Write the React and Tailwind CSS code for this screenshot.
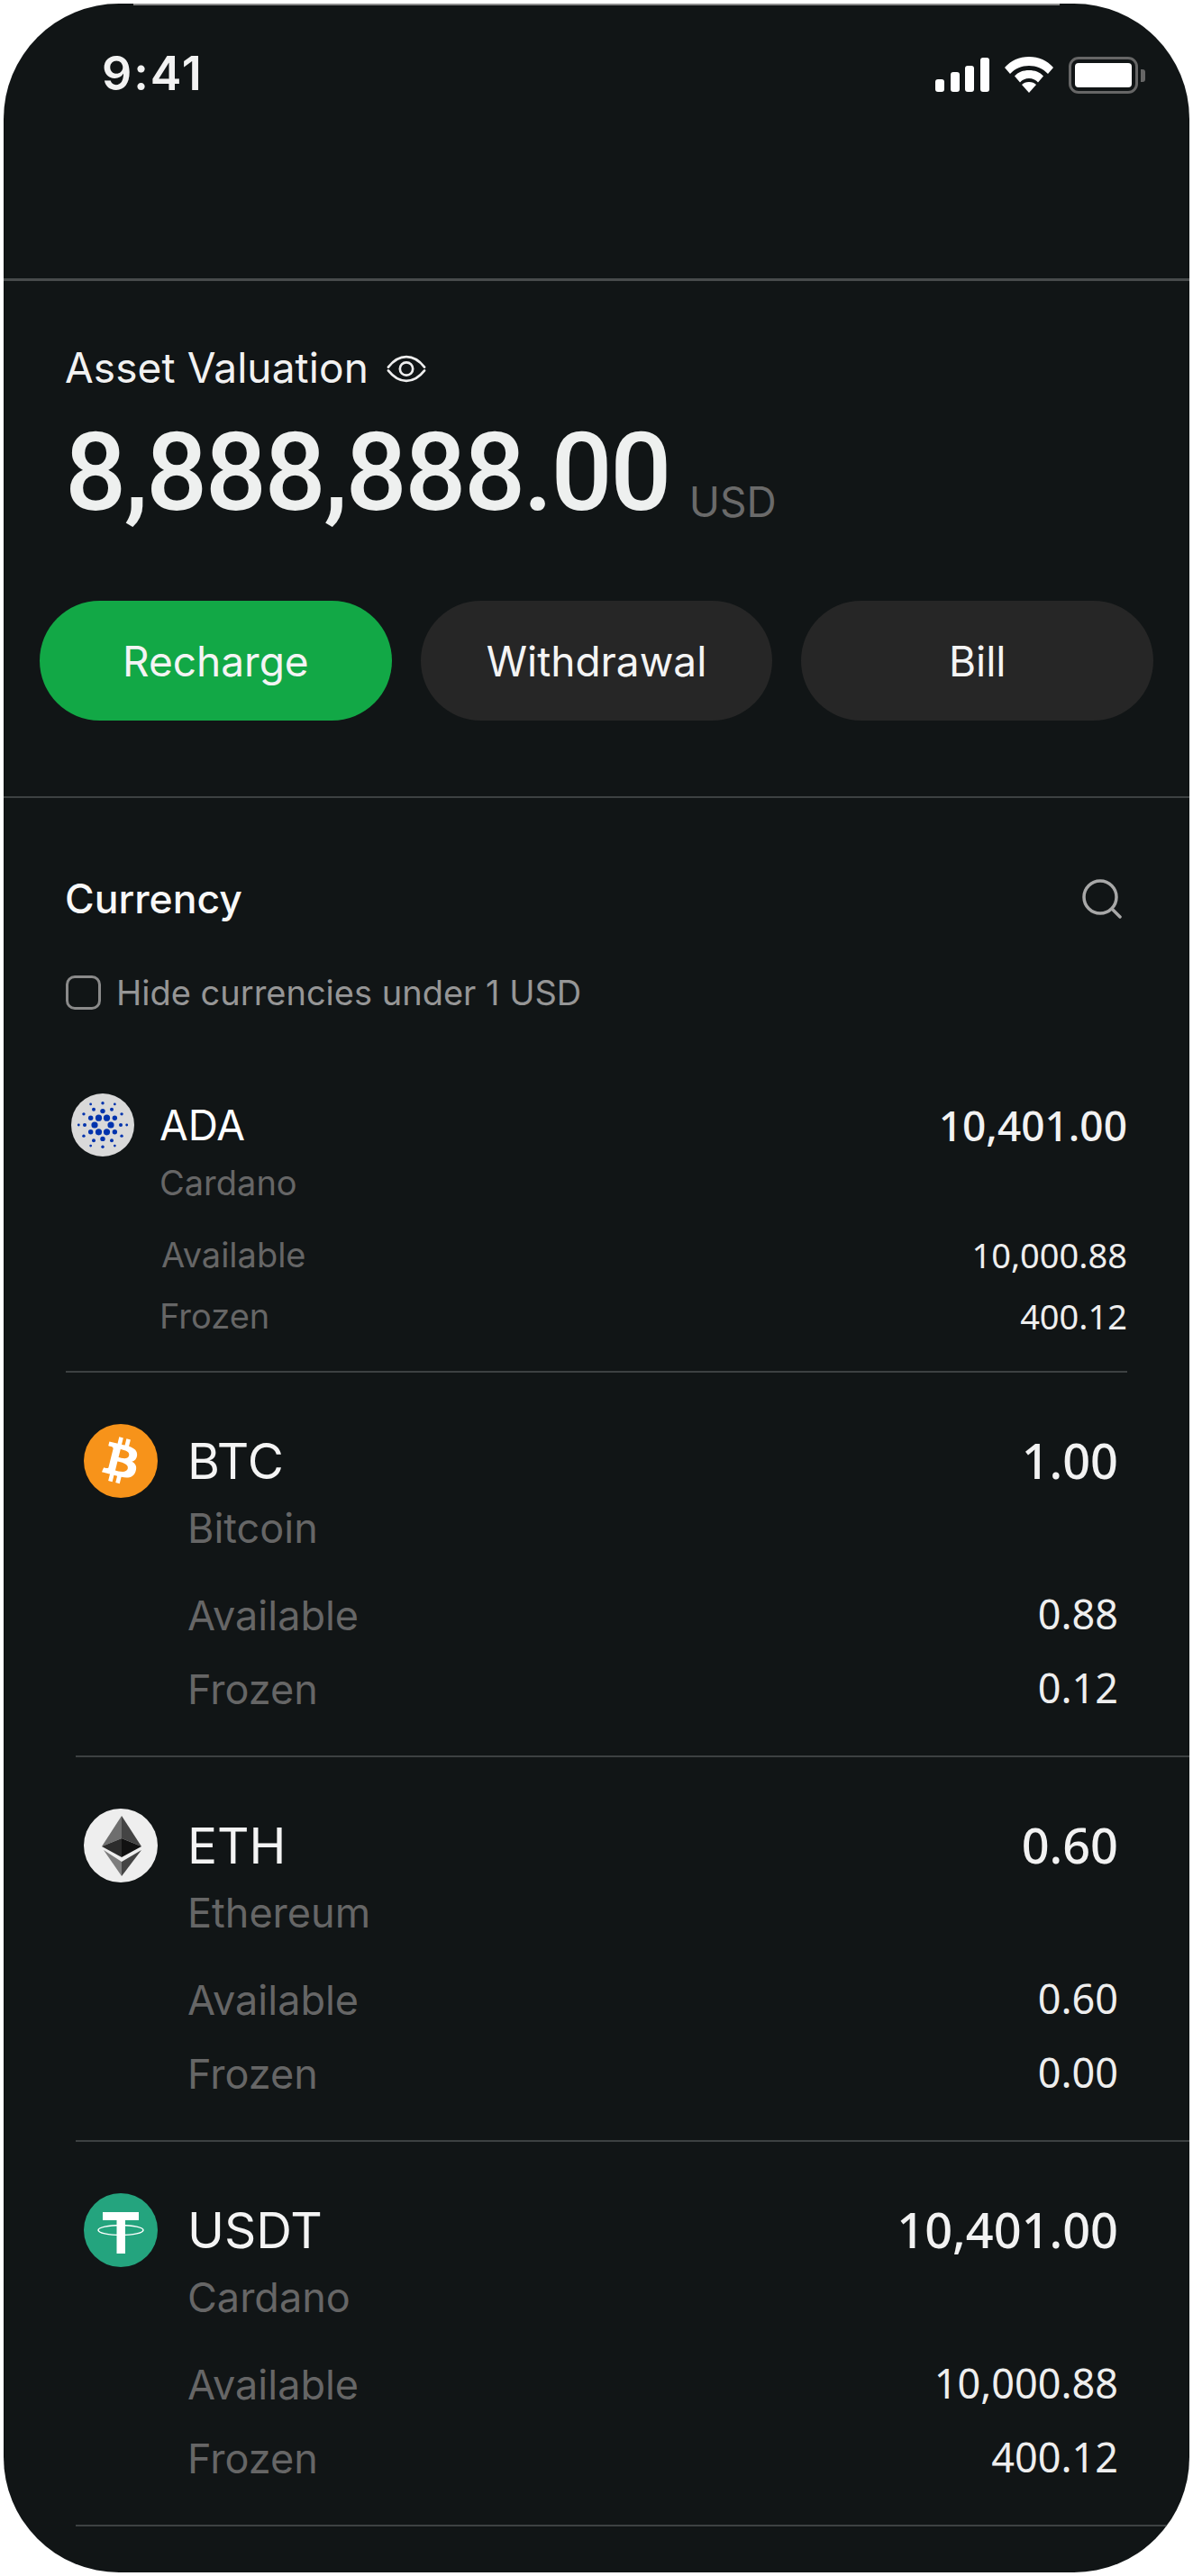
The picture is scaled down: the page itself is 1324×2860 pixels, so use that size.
import { useMemo } from "react";

const sans = { fontFamily: "Inter, sans-serif" };
const numbers = { fontFamily: "'Noto Sans', sans-serif" };

const AdaIcon = () => {
	// rings of dots, measured off the logo
	const dots = useMemo(() => {
		const rings = [
			{ d: 9, r: 3.6, a: 0 },
			{ d: 15.4, r: 2.7, a: 30 },
			{ d: 20, r: 2, a: 0 },
			{ d: 24.3, r: 1.7, a: 30 },
			{ d: 26.7, r: 1.4, a: 0 },
		];
		const out = [];
		rings.forEach((ring) => {
			for (let i = 0; i < 6; i++) {
				const t = ((ring.a + i * 60) * Math.PI) / 180;
				out.push({ x: 35 + ring.d * Math.cos(t), y: 35 + ring.d * Math.sin(t), r: ring.r });
			}
		});
		return out;
	}, []);
	return (
		<svg viewBox="0 0 70 70" className="w-[70px] h-[70px] shrink-0">
			<circle cx="35" cy="35" r="35" fill="#d9d9d9" />
			{dots.map((dot, i) => (
				<circle key={i} cx={dot.x} cy={dot.y} r={dot.r} fill="#0033ad" />
			))}
		</svg>
	);
};

const BtcIcon = () => (
	<svg viewBox="0 0 4091 4091" className="w-[82px] h-[82px] shrink-0">
		<circle cx="2045.5" cy="2045.5" r="2045.5" fill="#f7931a" />
		<path
			fill="#fff"
			d="M2947.77 1754.38c40.72,-272.26 -166.56,-418.61 -450,-516.24l91.95 -368.8 -224.5 -55.94 -89.51 359.09c-59.02,-14.72 -119.63,-28.59 -179.87,-42.34l90.16 -361.46 -224.36 -55.94 -92 368.68c-48.84,-11.12 -96.81,-22.11 -143.35,-33.69l0.26 -1.16 -309.59 -77.31 -59.72 239.78c0,0 166.56,38.18 163.05,40.53 90.91,22.69 107.35,82.87 104.62,130.57l-104.74 420.15c6.26,1.59 14.38,3.89 23.34,7.49 -7.49,-1.86 -15.46,-3.89 -23.73,-5.87l-146.81 588.57c-11.11,27.62 -39.31,69.07 -102.87,53.33 2.25,3.26 -163.17,-40.72 -163.17,-40.72l-111.46 256.98 292.15 72.83c54.35,13.63 107.61,27.89 160.06,41.3l-92.9 373.03 224.24 55.94 92 -369.07c61.26,16.63 120.71,31.97 178.91,46.43l-91.69 367.33 224.51 55.94 92.89 -372.33c382.82,72.45 670.67,43.24 791.83,-303.02 97.63,-278.78 -4.86,-439.58 -206.26,-544.44 146.69,-33.83 257.18,-130.31 286.64,-329.61l-0.07 -0.05zm-512.93 719.26c-69.38,278.78 -538.76,128.08 -690.94,90.29l123.28 -494.2c152.17,37.99 640.17,113.17 567.66,403.91zm69.43 -723.3c-63.29,253.58 -453.96,124.75 -580.69,93.16l111.77 -448.21c126.73,31.59 534.85,90.55 468.92,355.05z"
		/>
	</svg>
);

const EthIcon = () => (
	<svg viewBox="0 0 82 82" className="w-[82px] h-[82px] shrink-0">
		<circle cx="41" cy="41" r="41" fill="#eeeeee" />
		<polygon points="42,8 20,42 42,33" fill="#6e6e6e" />
		<polygon points="42,8 64,42 42,33" fill="#444444" />
		<polygon points="20,42 42,33 42,54" fill="#2c2c2c" />
		<polygon points="64,42 42,33 42,54" fill="#111111" />
		<polygon points="22,46 42,59 42,75" fill="#7d7d7d" />
		<polygon points="64,46 42,59 42,75" fill="#444444" />
	</svg>
);

const UsdtIcon = () => (
	<svg viewBox="0 0 82 82" className="w-[82px] h-[82px] shrink-0">
		<circle cx="41" cy="41" r="41" fill="#24a47e" />
		<rect x="21" y="21" width="40" height="9" fill="#fff" />
		<rect x="36.500" y="21" width="9.500" height="46" fill="#fff" />
		<ellipse cx="41" cy="41" rx="25" ry="5.500" fill="none" stroke="#fff" strokeWidth="1.500" />
	</svg>
);

const EyeIcon = () => (
	<svg viewBox="0 0 46 32" className="w-[44px] h-[31px]" fill="none" stroke="#eeeeee" strokeWidth="2.800" strokeLinecap="round">
		<path d="M2 14C9 5 15 2 23 2s14 3 21 12" />
		<path d="M2 18c7 9 13 12 21 12s14-3 21-12" />
		<circle cx="23" cy="16" r="7.500" />
	</svg>
);

const SearchIcon = () => (
	<svg viewBox="0 0 46 46" className="w-[46px] h-[46px]" fill="none" stroke="#a8a8a8" strokeWidth="3.500" strokeLinecap="round">
		<circle cx="21" cy="21" r="18" />
		<path d="M35 35l8 8" />
	</svg>
);

const StatusIcons = () => (
	<div className="flex items-start gap-[17px] mt-[7px]">
		<svg viewBox="0 0 60 38" className="w-[60px] h-[38px] mt-[1px]" fill="#fff">
			<rect x="0" y="24" width="10" height="14" rx="3" />
			<rect x="17" y="16" width="10" height="22" rx="3" />
			<rect x="33" y="9" width="10" height="29" rx="3" />
			<rect x="50" y="0" width="10" height="38" rx="3" />
		</svg>
		<svg viewBox="0 0 54 40" className="w-[54px] h-[40px]" fill="#fff">
			<path d="M27 0C16 0 7 4 0 12l6 7c5.500-6 13-9 21-9s15.500 3 21 9l6-7C47 4 38 0 27 0z" />
			<path d="M27 15c-6.500 0-12 2-16 6.500l6 7c2.500-3 6-4.500 10-4.500s7.500 1.500 10 4.500l6-7C39 17 33.500 15 27 15z" />
			<path d="M27 28c-3.500 0-6 1-8 3l8 9 8-9c-2-2-4.500-3-8-3z" />
		</svg>
		<div className="flex items-center">
			<div className="w-[77px] h-[41px] rounded-[11px] border-[3px] border-[#666] p-[4px]">
				<div className="w-full h-full rounded-[4px] bg-white" />
			</div>
			<div className="w-[5px] h-[14px] ml-[3px] rounded-r-[3px] bg-[#666]" />
		</div>
	</div>
);

const ActionButton = ({ label, className }) => (
	<button className={`flex-1 h-[133px] rounded-[67px] flex items-center justify-center text-[46px] leading-none text-[#f4f4f4] ${className}`}>
		{label}
	</button>
);

const AdaRow = () => (
	<div className="mx-[69px] h-[311px] border-b-[2px] border-[#3d4142] pt-[1px]">
		<div className="flex items-start pl-[6px]">
			<AdaIcon />
			<div className="flex-1 ml-[28px] pt-[11px]">
				<div className="flex justify-between items-center h-[48px]">
					<span className="text-[46px] leading-none text-white">ADA</span>
					<span className="text-[46px] leading-none font-medium text-[#f2f2f2]" style={numbers}>
						10,401.00
					</span>
				</div>
				<div className="mt-[16px] h-[48px] flex items-center text-[38px] leading-none text-[#666]">Cardano</div>
				<div className="mt-[36px] h-[40px] flex items-center justify-between">
					<span className="text-[38px] leading-none text-[#666] pl-[2px]">Available</span>
					<span className="text-[38px] leading-none text-[#eee]" style={numbers}>
						10,000.88
					</span>
				</div>
				<div className="mt-[28px] h-[40px] flex items-center justify-between">
					<span className="text-[38px] leading-none text-[#666]">Frozen</span>
					<span className="text-[38px] leading-none text-[#eee]" style={numbers}>
						400.12
					</span>
				</div>
			</div>
		</div>
	</div>
);

const CoinRow = ({ icon, symbol, name, total, available, frozen }) => (
	<div className="ml-[80px] h-[427px] border-b-[2px] border-[#3d4142] pt-[57px] pr-[79px]">
		<div className="flex items-start pl-[9px]">
			{icon}
			<div className="flex-1 ml-[33px]">
				<div className="flex justify-between items-center h-[82px]">
					<span className="text-[55px] leading-none text-[#f4f4f4]">{symbol}</span>
					<span className="text-[54px] leading-none font-medium text-[#f2f2f2] pb-[3px]" style={numbers}>
						{total}
					</span>
				</div>
				<div className="h-[50px] mt-[8px] flex items-center text-[45px] leading-none text-[#666]">{name}</div>
				<div className="h-[50px] mt-[47px] flex items-center justify-between">
					<span className="text-[45px] leading-none text-[#666]">Available</span>
					<span className="text-[45px] leading-none text-[#eee] pb-[3px]" style={numbers}>
						{available}
					</span>
				</div>
				<div className="h-[50px] mt-[32px] flex items-center justify-between">
					<span className="text-[45px] leading-none text-[#666]">Frozen</span>
					<span className="text-[45px] leading-none text-[#eee] pb-[3px]" style={numbers}>
						{frozen}
					</span>
				</div>
			</div>
		</div>
	</div>
);

const App = () => {
	return (
		<div className="w-[1324px] h-[2860px] bg-white p-[4px]" style={sans}>
			<div className="w-full h-full rounded-[128px] overflow-hidden bg-[#111516]">
				<div className="h-[2px] mx-[144px] bg-[#8a8a8a]" />
				<div className="h-[306px] border-b-[3px] border-[#484b4c] pl-[109px] pr-[49px] pt-[50px] flex items-start justify-between">
					<span className="text-[52px] leading-[52px] font-semibold tracking-[2px] text-[#f2f2f2]">9:41</span>
					<StatusIcons />
				</div>

				<div className="h-[574px] border-b-[2px] border-[#3d4142] px-[40px] pt-[71px]">
					<div className="flex items-center pl-[28px] h-[50px]">
						<span className="text-[46px] leading-none tracking-[0.1px] text-[#f2f2f2]">Asset Valuation</span>
						<span className="ml-[20px] mt-[2px]">
							<EyeIcon />
						</span>
					</div>
					<div className="flex items-baseline pl-[28px] mt-[37px] h-[110px]" style={{ fontFamily: "Roboto, sans-serif" }}>
						<span className="text-[120px] leading-[110px] font-medium tracking-[-2.500px] text-[#eef0ef]">8,888,888.00</span>
						<span className="ml-[22px] self-end text-[46px] leading-none text-[#6a6a6a]" style={sans}>USD</span>
					</div>
					<div className="flex gap-[32px] mt-[87px]">
						<ActionButton label="Recharge" className="bg-[#12a846]" />
						<ActionButton label="Withdrawal" className="bg-[#262626]" />
						<ActionButton label="Bill" className="bg-[#262626]" />
					</div>
				</div>

				<div className="pl-[68px] pr-[74px] pt-[84px] flex items-center justify-between">
					<span className="text-[44.500px] leading-[56px] font-medium text-[#f8f8f8]">Currency</span>
					<SearchIcon />
				</div>
				<div className="px-[69px] mt-[57px] flex items-center">
					<div className="w-[39px] h-[38px] rounded-[10px] border-[3px] border-[#8a8a8a]" />
					<span className="ml-[17px] text-[38px] leading-none text-[#969696]">Hide currencies under 1 USD</span>
				</div>
				<div className="h-[92px]" />
				<AdaRow />
				<CoinRow
					icon={<BtcIcon />}
					symbol="BTC"
					name="Bitcoin"
					total="1.00"
					available="0.88"
					frozen="0.12"
				/>
				<CoinRow
					icon={<EthIcon />}
					symbol="ETH"
					name="Ethereum"
					total="0.60"
					available="0.60"
					frozen="0.00"
				/>
				<CoinRow
					icon={<UsdtIcon />}
					symbol="USDT"
					name="Cardano"
					total="10,401.00"
					available="10,000.88"
					frozen="400.12"
				/>
			</div>
		</div>
	);
};

export default App;
